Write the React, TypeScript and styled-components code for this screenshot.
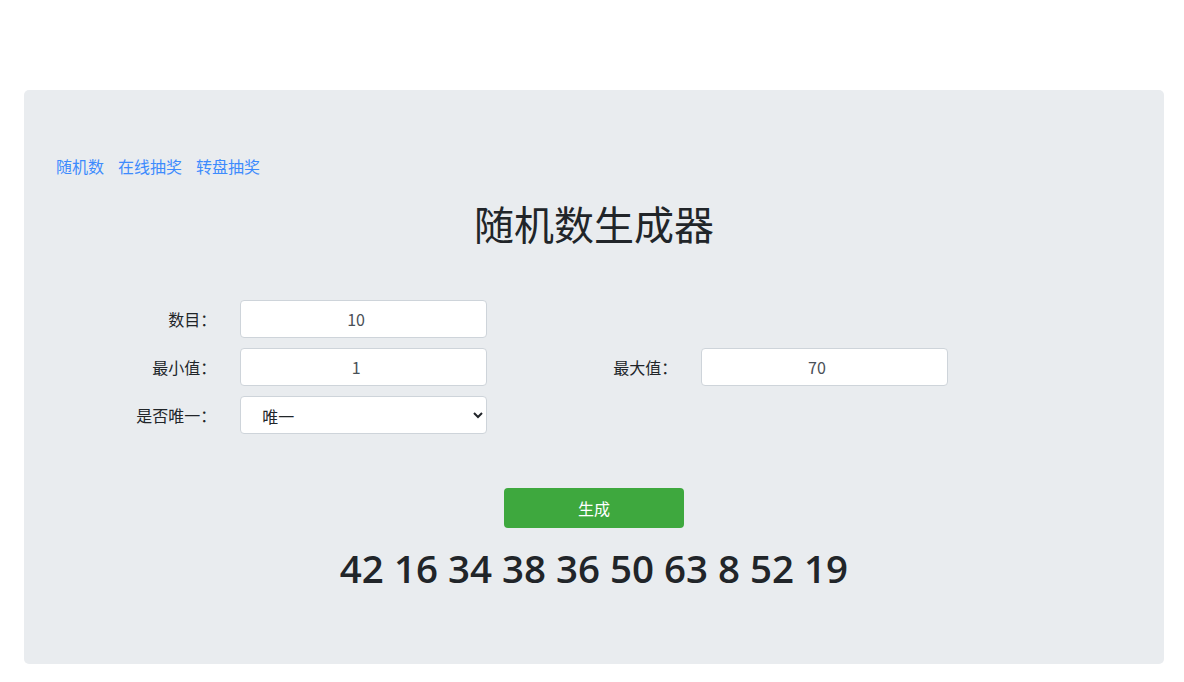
import React, { FC, useState } from 'react'
import styled, { createGlobalStyle } from 'styled-components'

const GlobalStyle = createGlobalStyle`
    html, body {
        margin: 0;
        padding: 0;
        background: #fff;
    }
    body {
        font-family: "Noto Sans CJK SC", "Noto Sans", sans-serif;
        font-size: 16px;
        color: #212529;
    }
`

const initialNumbers = [42, 16, 34, 38, 36, 50, 63, 8, 52, 19]

const App: FC = () => {
    const [count, setCount] = useState('10')
    const [min, setMin] = useState('1')
    const [max, setMax] = useState('70')
    const [unique, setUnique] = useState('1')
    const [numbers, setNumbers] = useState<number[]>(initialNumbers)

    const handleGenerate = () => {
        const n = Number(count) || 0
        const lo = Number(min) || 0
        const hi = Number(max) || 0
        const out: number[] = []
        let guard = 0
        while (out.length < n && guard < 10000) {
            guard++
            const v = lo + Math.floor(Math.random() * (hi - lo + 1))
            if (unique === '1' && out.includes(v)) continue
            out.push(v)
        }
        setNumbers(out)
    }

    return (
        <>
            <GlobalStyle />
            <Page>
                <Jumbotron>
                    <Nav>
                        <NavLink href="#">随机数</NavLink>
                        <NavLink href="#">在线抽奖</NavLink>
                        <NavLink href="#">转盘抽奖</NavLink>
                    </Nav>
                    <Title>随机数生成器</Title>
                    <Form>
                        <Label>数目：</Label>
                        <Input type="number" value={count} onChange={e => setCount(e.target.value)} />
                        <Empty />
                        <Empty />
                        <Label>最小值：</Label>
                        <Input type="number" value={min} onChange={e => setMin(e.target.value)} />
                        <Label>最大值：</Label>
                        <Input type="number" value={max} onChange={e => setMax(e.target.value)} />
                        <Label>是否唯一：</Label>
                        <Select value={unique} onChange={e => setUnique(e.target.value)}>
                            <option value="1">唯一</option>
                            <option value="0">不唯一</option>
                        </Select>
                    </Form>
                    <Actions>
                        <Button onClick={handleGenerate}>生成</Button>
                    </Actions>
                    <Result>{numbers.join(' ')}</Result>
                </Jumbotron>
            </Page>
        </>
    )
}

export default App

const Page = styled.div`
    padding: 90px 20px 19px 24px;
`
const Jumbotron = styled.div`
    width: 1140px;
    box-sizing: border-box;
    background: #e9ecef;
    border-radius: 5px;
    padding: 64px 32px 72px;
`
const Nav = styled.div`
    display: flex;
    column-gap: 14px;
    line-height: 24px;
`
const NavLink = styled.a`
    color: #3d8bfd;
    text-decoration: none;
    font-size: 16px;
`
const Title = styled.h1`
    margin: 21px 0 53px;
    text-align: center;
    font-size: 40px;
    font-weight: 400;
    line-height: 48px;
    color: #212529;
`
const Form = styled.div`
    display: grid;
    grid-template-columns: 154.33px 246.5px 154.33px 246.5px;
    column-gap: 30px;
    row-gap: 10px;
    align-items: center;
`
const Label = styled.label`
    text-align: right;
    font-size: 16px;
    line-height: 24px;
    color: #212529;
    margin-right: -6px;
`
const Empty = styled.div``
const fieldBase = `
    box-sizing: border-box;
    height: 38px;
    width: 100%;
    border: 1px solid #ced4da;
    border-radius: 4px;
    background: #fff;
    font-family: "Noto Sans CJK SC", "Noto Sans", sans-serif;
    font-size: 16px;
    color: #495057;
    outline: none;
`
const Input = styled.input`
    ${fieldBase}
    padding: 6px 12px;
    text-align: center;
`
const Select = styled.select`
    ${fieldBase}
    padding: 6px 8px 6px 17px;
    color: #212529;
`
const Actions = styled.div`
    display: flex;
    justify-content: center;
    margin-top: 54px;
`
const Button = styled.button`
    width: 180px;
    height: 40px;
    border: none;
    border-radius: 4px;
    background: #3ea83e;
    color: #fff;
    font-family: "Noto Sans CJK SC", "Noto Sans", sans-serif;
    font-size: 16px;
    cursor: pointer;
`
const Result = styled.div`
    margin-top: 16px;
    text-align: center;
    font-family: "Open Sans", "Noto Sans", sans-serif;
    font-weight: 600;
    font-size: 38.5px;
    line-height: 48px;
    color: #212529;
`
